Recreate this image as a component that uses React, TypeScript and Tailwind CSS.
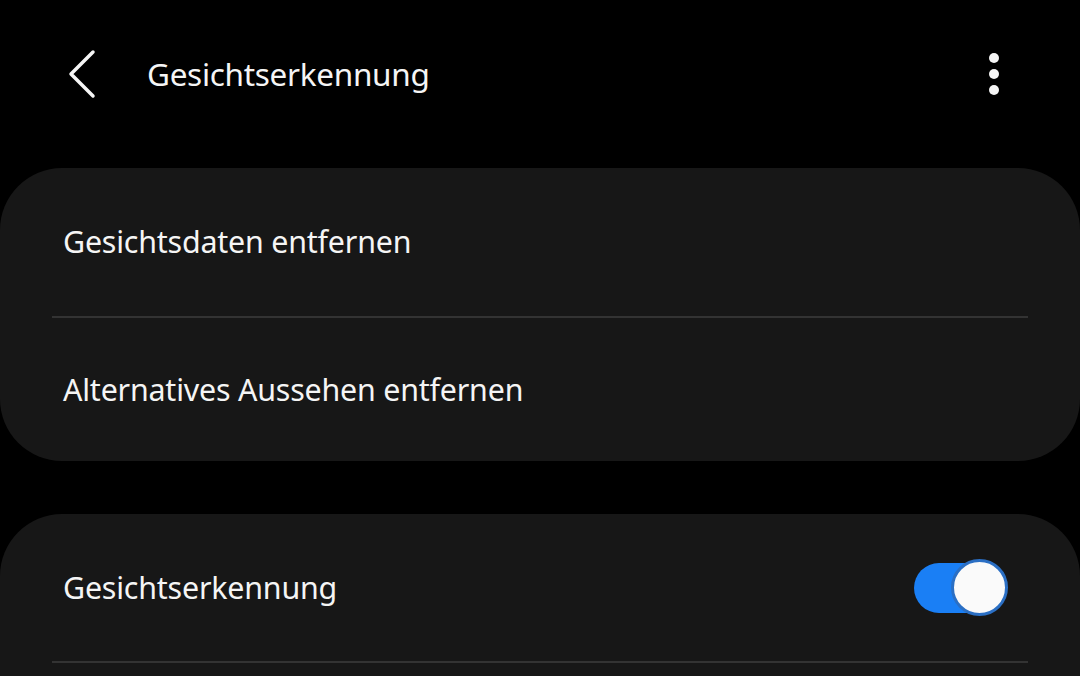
import React from "react";

const font = { fontFamily: '"Noto Sans", Roboto, sans-serif' };

function Row({ label, toggle }: { label: string; toggle?: boolean }) {
  return (
    <div className="flex items-center justify-between pl-[63px] pr-[72px] h-full">
      <span className="text-[30.4px] text-[#f5f5f5] tracking-[-0.2px]">{label}</span>
      {toggle && (
        <div className="relative w-[94px] h-[57px]">
          <div className="absolute left-0 top-[4px] w-[90px] h-[50px] rounded-full bg-[#1a7ff5]" />
          <div className="absolute right-0 top-0 w-[57px] h-[57px] rounded-full bg-[#fafafa] border-[3px] border-[#2b6fc4]" />
        </div>
      )}
    </div>
  );
}

export default function App() {
  return (
    <div className="w-[1080px] h-[676px] bg-black overflow-hidden" style={font}>
      <div className="flex items-center h-[150px] pb-[2px]">
        <div className="w-[147px] flex justify-start pl-[66px]">
          <svg width="32" height="50" viewBox="0 0 32 50" fill="none">
            <path d="M27 3 L5 25 L27 47" stroke="#f5f5f5" strokeWidth="3.5" strokeLinecap="round" strokeLinejoin="round" />
          </svg>
        </div>
        <span className="text-[31.5px] text-[#f5f5f5] flex-1 tracking-[-0.3px]">Gesichtserkennung</span>
        <div className="mr-[80px]">
          <svg width="12" height="44" viewBox="0 0 12 44">
            <circle cx="6" cy="6" r="5" fill="#f5f5f5" />
            <circle cx="6" cy="22" r="5" fill="#f5f5f5" />
            <circle cx="6" cy="38" r="5" fill="#f5f5f5" />
          </svg>
        </div>
      </div>
      <div className="h-[18px]" />
      <div className="bg-[#171717] rounded-[62px] h-[293px] flex flex-col">
        <div className="h-[148px]">
          <Row label="Gesichtsdaten entfernen" />
        </div>
        <div className="mx-[52px] h-[2px] bg-[#333333]" />
        <div className="flex-1">
          <Row label="Alternatives Aussehen entfernen" />
        </div>
      </div>
      <div className="h-[53px]" />
      <div className="bg-[#171717] rounded-t-[62px] h-[200px] flex flex-col">
        <div className="h-[147px]">
          <Row label="Gesichtserkennung" toggle />
        </div>
        <div className="mx-[52px] h-[2px] bg-[#333333]" />
      </div>
    </div>
  );
}
